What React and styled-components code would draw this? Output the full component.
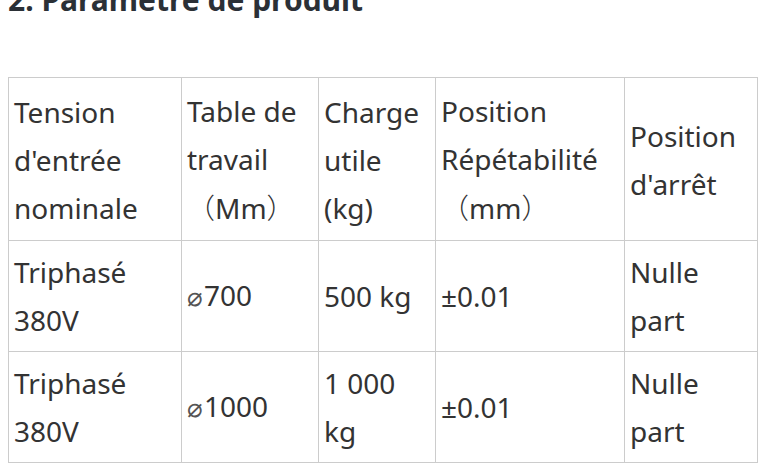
import React from "react";
import styled, { createGlobalStyle } from "styled-components";

const GlobalStyle = createGlobalStyle`
  html, body {
    margin: 0;
    padding: 0;
    background: #ffffff;
  }
  body {
    font-family: "Noto Sans", "Noto Sans CJK JP", sans-serif;
    color: #333333;
    overflow: hidden;
  }
`;

const Page = styled.section`
  padding: 0 4px 0 8px;
  width: 760px;
  box-sizing: border-box;
`;

const Heading = styled.h2`
  margin: -24px 0 53px;
  font-size: 30px;
  line-height: 48px;
  font-weight: 700;
  color: #2b3036;
`;

const SpecTable = styled.table`
  border-collapse: collapse;
  width: 749px;
  table-layout: fixed;
  font-size: 28px;
  line-height: 48px;
  color: #333333;
`;

const Cell = styled.td`
  border: 1px solid #cccccc;
  padding: ${(p) => (p.$head ? "9px 5px 8px" : "7px 5px")};
  vertical-align: middle;
  text-align: left;
`;

const Paren = styled.span`
  font-family: "Noto Sans CJK JP", sans-serif;
  font-weight: 300;
`;

const Diameter = styled.span`
  font-family: "DejaVu Sans", sans-serif;
  font-size: 26px;
  font-weight: 300;
  color: #555555;
  margin-right: 1px;
`;

const widths = [173, 137, 117, 189, 133];

const rows = [
  ["Triphasé 380V", "700", "500 kg", "±0.01", "Nulle part"],
  ["Triphasé 380V", "1000", "1 000 kg", "±0.01", "Nulle part"],
];

const App = () => {
  return (
    <>
      <GlobalStyle />
      <Page>
        <Heading>2. Paramètre de produit</Heading>
        <SpecTable>
          <colgroup>
            {widths.map((w, i) => (
              <col key={i} style={{ width: w }} />
            ))}
          </colgroup>
          <tbody>
            <tr>
              <Cell $head>Tension d'entrée nominale</Cell>
              <Cell $head>
                Table de travail <Paren>（</Paren>Mm<Paren>）</Paren>
              </Cell>
              <Cell $head>Charge utile (kg)</Cell>
              <Cell $head>
                Position Répétabilité <Paren>（</Paren>mm<Paren>）</Paren>
              </Cell>
              <Cell $head>Position d'arrêt</Cell>
            </tr>
            {rows.map((r, i) => (
              <tr key={i}>
                <Cell>{r[0]}</Cell>
                <Cell>
                  <Diameter>⌀</Diameter>
                  {r[1]}
                </Cell>
                <Cell>{r[2]}</Cell>
                <Cell>{r[3]}</Cell>
                <Cell>{r[4]}</Cell>
              </tr>
            ))}
          </tbody>
        </SpecTable>
      </Page>
    </>
  );
};

export default App;
